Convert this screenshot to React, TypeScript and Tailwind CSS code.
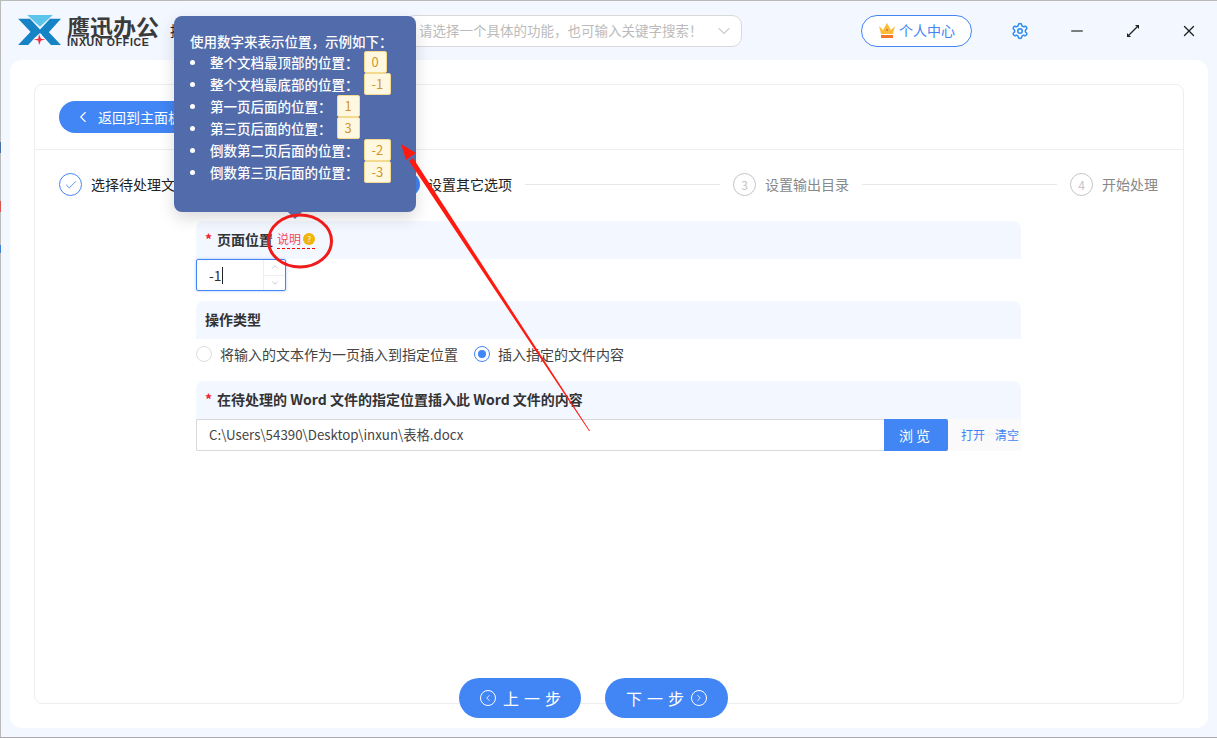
import { ChevronDown, ChevronLeft, ChevronUp, ChevronRight, Check, Settings, X, Minus } from 'lucide-react';

const font = { fontFamily: '"Noto Sans CJK SC", "Noto Sans", sans-serif' };

const tips = [
  { text: '整个文档最顶部的位置\uFF1A', code: '0' },
  { text: '整个文档最底部的位置\uFF1A', code: '-1' },
  { text: '第一页后面的位置\uFF1A', code: '1' },
  { text: '第三页后面的位置\uFF1A', code: '3' },
  { text: '倒数第二页后面的位置\uFF1A', code: '-2' },
  { text: '倒数第三页后面的位置\uFF1A', code: '-3' },
];

function Logo() {
  return (
    <div className="flex items-center gap-[5px]">
      <svg width="44" height="31" viewBox="0 0 48 34">
        <polygon points="0,4 13,4 26,18 19,24" fill="#1583c4" />
        <polygon points="0,33 11,33 21,22 15,17" fill="#1583c4" />
        <polygon points="47,4 35,4 22,18 29,24" fill="#1583c4" />
        <polygon points="47,33 36,33 26,22 32,17" fill="#1583c4" />
        <polygon points="10,0 24,0 24,13" fill="#5cc3ea" />
        <polygon points="38,0 24,0 24,13" fill="#5cc3ea" />
        <polygon points="23,21 25,26 30,27 25,28 23,33 22,28 17,27 22,26" fill="#ee2c3c" />
      </svg>
      <div className="flex flex-col">
        <span className="text-[23px] leading-[24px] font-bold text-[#3b3b3b] whitespace-nowrap">鹰迅办公</span>
        <span className="text-[10.5px] leading-[9px] font-bold tracking-[0.7px] text-[#333] whitespace-nowrap" style={{ fontFamily: '"Liberation Sans", sans-serif' }}>INXUN OFFICE</span>
      </div>
    </div>
  );
}

function Crown() {
  return (
    <svg width="18" height="17" viewBox="0 0 18 17">
      <polygon points="1,4 5,8 9,1 13,8 17,4 15,12 3,12" fill="#fbbc3c" />
      <rect x="3" y="13" width="12" height="3" fill="#f5762a" />
      <circle cx="9" cy="8" r="1" fill="#c9772a" />
    </svg>
  );
}

function Heading({ children, required }: { children: React.ReactNode; required?: boolean }) {
  return (
    <div className="flex h-[38px] items-center rounded-t-lg bg-[#f3f7ff] px-[9px] pb-[2px] text-[14px] font-bold text-[#333]">
      {required && <span className="mr-[5px] text-[#f5222d]">*</span>}
      {children}
    </div>
  );
}

function Step({ num, label, active, done }: { num?: string; label: string; active?: boolean; done?: boolean }) {
  return (
    <div className="flex items-center gap-[9px] whitespace-nowrap">
      <div className={`flex h-[23px] w-[23px] items-center justify-center rounded-full border text-[12px] ${done ? 'border-[#4285f4] text-[#4285f4]' : 'border-[#c4c4c4] text-[#c4c4c4]'}`}>
        {done ? <Check size={14} strokeWidth={1.5} /> : num}
      </div>
      <span className={`text-[14px] ${active ? 'text-[#222]' : 'text-[#888]'}`}>{label}</span>
    </div>
  );
}

export default function App() {
  return (
    <div className="relative h-[738px] w-[1217px] overflow-hidden border-t border-b border-t-[#bbb] border-b-[#aaa] bg-[#f3f7ff] shadow-[inset_1px_0_0_#bbb]" style={font}>
      {/* slivers of the desktop behind the window */}
      <div className="absolute left-0 top-[141px] h-[11px] w-px bg-[#4a6fa5]" />
      <div className="absolute left-0 top-[200px] h-[11px] w-px bg-[#d9534f]" />
      <div className="absolute left-0 top-[244px] h-[8px] w-px bg-[#3f7fd0]" />

      {/* title bar */}
      <div className="flex h-[59px] items-center pl-[18px]">
        <Logo />
        <span className="ml-[11px] text-[14px] text-[#222]">按</span>
        <div className="ml-[221px] flex h-[32px] w-[337px] items-center justify-between rounded-[10px] border border-[#d9d9d9] bg-white pl-[13px] pr-[7px] text-[13.5px] text-[#bbb]">
          <span className="whitespace-nowrap">{'请选择一个具体的功能\uFF0C也可输入关键字搜索\uFF01'}</span>
          <ChevronDown size={20} strokeWidth={1} className="text-[#999]" />
        </div>
        <div className="ml-[119px] flex h-[32px] w-[111px] items-center justify-center gap-[3px] rounded-full border border-[#4285f4] bg-white text-[14px] text-[#4285f4]">
          <Crown />
          个人中心
        </div>
        <Settings size={18} className="ml-[39px] text-[#2d8cf0]" />
        <Minus size={18} className="ml-[39px] text-[#555]" />
        <svg width="16" height="16" viewBox="0 0 16 16" className="ml-[39px]">
          <path d="M4 12 L12 4" stroke="#222" strokeWidth="1.2" />
          <polygon points="10,2 14,2 14,6" fill="#222" />
          <polygon points="2,10 2,14 6,14" fill="#222" />
        </svg>
        <X size={18} strokeWidth={1.8} className="ml-[39px] text-[#222]" />
      </div>

      {/* main card */}
      <div className="mx-[10px] h-[668px] w-[1198px] rounded-xl bg-white px-[24px] pt-[24px]">
        <div className="flex h-[620px] flex-col rounded-lg border border-[#eee]">
          <div className="flex h-[65px] shrink-0 items-center border-b border-[#eee] pl-[24px]">
            <div className="flex h-[32px] w-[180px] items-center gap-[6px] rounded-l-full bg-[#4285f4] pl-[15px] text-[14px] text-white">
              <ChevronLeft size={18} strokeWidth={1.5} />
              <span className="whitespace-nowrap">返回到主面板</span>
            </div>
          </div>

          <div className="mt-[23px] flex items-center pl-[24px]">
            <Step done label="选择待处理文件" active />
            <div className="ml-[208px] h-[23px] w-[23px] shrink-0 rounded-full bg-[#4285f4]" />
            <span className="ml-[8px] whitespace-nowrap text-[14px] text-[#222]">设置其它选项</span>
            <div className="mx-[13px] h-px w-[195px] bg-[#e8e8e8]" />
            <Step num="3" label="设置输出目录" />
            <div className="mx-[13px] h-px w-[195px] bg-[#e8e8e8]" />
            <Step num="4" label="开始处理" />
          </div>

          <div className="ml-[161px] mt-[25px] w-[825px]">
            <Heading required>
              页面位置
              <span className="relative ml-[4px] flex items-center gap-[2px] border-b border-dashed border-[#f00] text-[12px] font-normal text-[#f5475b]">
                说明
                <span className="flex h-[12px] w-[12px] items-center justify-center rounded-full bg-[#f0b40f] text-[8px] text-white">?</span>
              </span>
            </Heading>
            <div className="flex h-[32px] w-[90px] rounded-[2px] border border-[#4285f4] shadow-[0_0_3px_#a9c7fa]">
              <div className="flex flex-1 items-center pl-[12px] text-[14px] text-[#333]">
                -1<span className="h-[17px] w-px bg-[#222]" />
              </div>
              <div className="flex w-[22px] flex-col border-l border-[#eee] text-[#c4c4c4]">
                <div className="flex flex-1 items-center justify-center border-b border-[#eee]"><ChevronUp size={10} /></div>
                <div className="flex flex-1 items-center justify-center"><ChevronDown size={10} /></div>
              </div>
            </div>

            <div className="mt-[10px]">
              <Heading>操作类型</Heading>
              <div className="flex h-[32px] items-center pb-[2px] text-[14px] text-[#444]">
                <span className="h-[16px] w-[16px] rounded-full border border-[#ddd]" />
                <span className="ml-[8px]">将输入的文本作为一页插入到指定位置</span>
                <span className="ml-[16px] flex h-[16px] w-[16px] items-center justify-center rounded-full border border-[#4285f4]">
                  <span className="h-[8px] w-[8px] rounded-full bg-[#4285f4]" />
                </span>
                <span className="ml-[8px]">插入指定的文件内容</span>
              </div>
            </div>

            <div className="mt-[10px]">
              <Heading required>在待处理的 Word 文件的指定位置插入此 Word 文件的内容</Heading>
              <div className="flex h-[32px]">
                <div className="flex flex-1 items-center rounded-l-[2px] border border-r-0 border-[#d9d9d9] pb-[1px] pl-[12px] text-[13.3px] text-[#444]">C:\Users\54390\Desktop\inxun\表格.docx</div>
                <div className="flex w-[64px] items-center justify-center rounded-r-[2px] bg-[#4285f4] text-[14px] tracking-[3px] text-white">浏览</div>
                <div className="flex w-[73px] items-center gap-[10px] whitespace-nowrap bg-[#fafafa] pl-[13px] text-[12px] text-[#4285f4]">
                  <span>打开</span>
                  <span>清空</span>
                </div>
              </div>
            </div>
          </div>
        </div>
      </div>

      {/* footer buttons sit across the panel border */}
      <div className="absolute left-[459px] top-[677px] flex gap-[24px] text-[16px] tracking-[5px] text-white">
        <div className="flex h-[40px] w-[122px] items-center gap-[7px] rounded-full bg-[#4285f4] pl-[21px]">
          <span className="flex h-[16px] w-[16px] items-center justify-center rounded-full border border-white"><ChevronLeft size={10} /></span>
          <span className="whitespace-nowrap">上一步</span>
        </div>
        <div className="flex h-[40px] w-[123px] items-center gap-[2px] rounded-full bg-[#4285f4] pl-[21px]">
          <span className="whitespace-nowrap">下一步</span>
          <span className="flex h-[16px] w-[16px] items-center justify-center rounded-full border border-white"><ChevronRight size={10} /></span>
        </div>
      </div>

      {/* tooltip */}
      <div className="absolute left-[174px] top-[15px] h-[196px] w-[242px] rounded-lg bg-[#526cab] pl-[16px] pt-[15px] text-[13.5px] text-white shadow-[0_6px_16px_rgba(0,0,0,0.15)]">
        <div className="leading-[20px] font-medium">{'使用数字来表示位置\uFF0C示例如下\uFF1A'}</div>
        <ul>
          {tips.map((t) => (
            <li key={t.code} className="flex h-[22px] items-center whitespace-nowrap font-medium">
              <span className="mr-[15px] h-[5px] w-[5px] rounded-full bg-white" />
              {t.text}
              <span className="ml-[5px] flex h-[22px] items-center rounded-[2px] border border-[#f5d98f] bg-[#fff8e1] px-[7px] text-[13px] font-normal text-[#d4952a]">{t.code}</span>
            </li>
          ))}
        </ul>
        <div className="absolute -bottom-[5px] left-[116px] h-[10px] w-[10px] rotate-45 bg-[#526cab]" />
      </div>

      {/* annotation: red circle and arrow */}
      <svg className="pointer-events-none absolute left-0 top-0" width="1217" height="738">
        <ellipse cx="300" cy="240" rx="31.5" ry="26" fill="none" stroke="#f01c1c" strokeWidth="3" />
        <polygon points="590,430 589,430 409,160 413,157" fill="#ff1a0f" />
        <polygon points="401,143 416,152 406,159" fill="#ff1a0f" />
      </svg>
    </div>
  );
}
